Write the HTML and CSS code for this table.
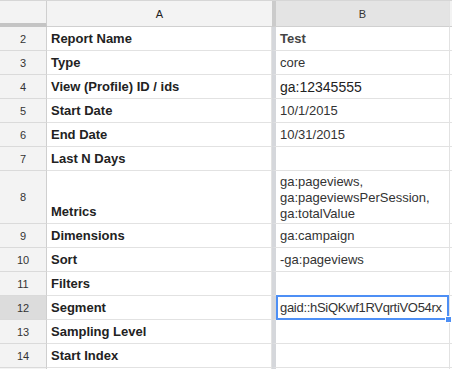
FILE: index.html
```html
<!DOCTYPE html>
<html lang="en">
<head>
    <meta charset="UTF-8">
    <meta name="viewport" content="width=device-width, initial-scale=1.0">
    <title>Report Configuration</title>
    <link rel="stylesheet" href="styles.css">
</head>
<body>
    <div class="sheet">
        <div class="row head">
            <div class="num corner"></div>
            <div class="cell col-head">A</div>
            <div class="cell col-head active val">B</div>
            <div class="cell col-head"></div>
        </div>
        <div class="row">
            <div class="num">2</div>
            <div class="cell key">Report Name</div>
            <div class="cell val title">Test</div>
            <div class="cell"></div>
        </div>
        <div class="row">
            <div class="num">3</div>
            <div class="cell key">Type</div>
            <div class="cell val">core</div>
            <div class="cell"></div>
        </div>
        <div class="row">
            <div class="num">4</div>
            <div class="cell key">View (Profile) ID / ids</div>
            <div class="cell val big">ga:12345555</div>
            <div class="cell"></div>
        </div>
        <div class="row">
            <div class="num">5</div>
            <div class="cell key">Start Date</div>
            <div class="cell val">10/1/2015</div>
            <div class="cell"></div>
        </div>
        <div class="row">
            <div class="num">6</div>
            <div class="cell key">End Date</div>
            <div class="cell val">10/31/2015</div>
            <div class="cell"></div>
        </div>
        <div class="row">
            <div class="num">7</div>
            <div class="cell key">Last N Days</div>
            <div class="cell val"></div>
            <div class="cell"></div>
        </div>
        <div class="row tall">
            <div class="num">8</div>
            <div class="cell key">Metrics</div>
            <div class="cell val wrap">ga:pageviews,<br>ga:pageviewsPerSession,<br>ga:totalValue</div>
            <div class="cell"></div>
        </div>
        <div class="row">
            <div class="num">9</div>
            <div class="cell key">Dimensions</div>
            <div class="cell val">ga:campaign</div>
            <div class="cell"></div>
        </div>
        <div class="row">
            <div class="num">10</div>
            <div class="cell key">Sort</div>
            <div class="cell val">-ga:pageviews</div>
            <div class="cell"></div>
        </div>
        <div class="row">
            <div class="num">11</div>
            <div class="cell key">Filters</div>
            <div class="cell val"></div>
            <div class="cell"></div>
        </div>
        <div class="row">
            <div class="num active">12</div>
            <div class="cell key">Segment</div>
            <div class="cell val selected"><span class="clip">gaid::hSiQKwf1RVqrtiVO54rx</span></div>
            <div class="cell"></div>
        </div>
        <div class="row">
            <div class="num">13</div>
            <div class="cell key">Sampling Level</div>
            <div class="cell val"></div>
            <div class="cell"></div>
        </div>
        <div class="row">
            <div class="num">14</div>
            <div class="cell key">Start Index</div>
            <div class="cell val"></div>
            <div class="cell"></div>
        </div>
        <div class="row stub">
            <div class="num"></div>
            <div class="cell key"></div>
            <div class="cell val"></div>
            <div class="cell"></div>
        </div>
    </div>
</body>
</html>
```

FILE: styles.css
```css
body {
    margin: 0;
    font-family: "Liberation Sans", Arial, sans-serif;
    background-color: #fff;
    overflow: hidden;
}

.sheet {
    width: 452px;
}

.row {
    display: grid;
    grid-template-columns: 47px 225px 178px 2px;
    height: 24px;
}

.row.tall {
    height: 53px;
}

.row.stub {
    height: 2px;
}

.row.head {
    height: 26px;
    border-top: 1px solid #d6d6d6;
}

.num,
.cell {
    box-sizing: border-box;
    height: 100%;
    border-bottom: 1px solid #e2e2e2;
    display: flex;
    align-items: flex-end;
    padding: 0 4px 3px;
    color: #222;
    font-size: 13px;
    line-height: 16px;
    white-space: nowrap;
}

.stub .num,
.stub .cell {
    border-bottom: none;
    padding: 0;
}

.num {
    background-color: #f3f3f3;
    border-right: 1px solid #cfcfcf;
    border-bottom-color: #dadada;
    justify-content: center;
    align-items: center;
    padding: 0;
    font-size: 11px;
    color: #333;
}

.num.active {
    background-color: #dcdcdc;
}

.corner {
    border-bottom: 4px solid #c4c4c4;
}

.col-head {
    background-color: #f3f3f3;
    border-bottom-color: #d0d0d0;
    justify-content: center;
    align-items: center;
    padding: 0;
    font-size: 11px;
}

.col-head.active {
    background-color: #e4e4e4;
}

.key {
    font-weight: bold;
    border-right: 1px solid #e2e2e2;
}

.val {
    border-left: 4px solid #d5d7db;
    border-right: 1px solid #e2e2e2;
    color: #333;
}

.col-head.val {
    border-left-color: #cbcbcb;
}

.title {
    font-weight: bold;
    color: #444;
}

.big {
    font-size: 14px;
    color: #222;
}

.wrap {
    white-space: normal;
    padding-bottom: 1px;
}

.selected {
    position: relative;
}

.clip {
    display: block;
    overflow: hidden;
    width: 100%;
    letter-spacing: -0.3px;
}

.selected::after {
    content: "";
    position: absolute;
    left: 0;
    right: 0;
    top: -1px;
    bottom: -1px;
    border: 2px solid #4d8ff5;
}

.selected::before {
    content: "";
    position: absolute;
    right: -3px;
    bottom: -4px;
    width: 5px;
    height: 5px;
    background-color: #4d8ff5;
    border: 1px solid #fff;
    z-index: 1;
}
```
